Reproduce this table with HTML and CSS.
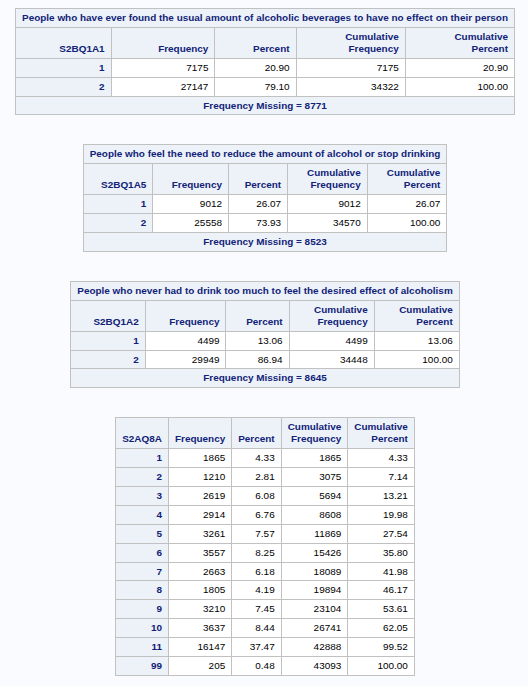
FILE: index.html
```html
<!DOCTYPE html>
<html>
<head>
<meta charset="utf-8">
<link rel="stylesheet" href="styles.css">
</head>
<body>
<div class="page">
<table class="freq">
<thead>
<tr><th class="title" colspan="5">People who have ever found the usual amount of alcoholic beverages to have no effect on their person</th></tr>
<tr><th>S2BQ1A1</th><th>Frequency</th><th>Percent</th><th>Cumulative<br>Frequency</th><th>Cumulative<br>Percent</th></tr>
</thead>
<tbody>
<tr><th>1</th><td>7175</td><td>20.90</td><td>7175</td><td>20.90</td></tr>
<tr><th>2</th><td>27147</td><td>79.10</td><td>34322</td><td>100.00</td></tr>
<tr><th class="foot" colspan="5">Frequency Missing = 8771</th></tr>
</tbody>
</table>

<table class="freq">
<thead>
<tr><th class="title" colspan="5">People who feel the need to reduce the amount of alcohol or stop drinking</th></tr>
<tr><th>S2BQ1A5</th><th>Frequency</th><th>Percent</th><th>Cumulative<br>Frequency</th><th>Cumulative<br>Percent</th></tr>
</thead>
<tbody>
<tr><th>1</th><td>9012</td><td>26.07</td><td>9012</td><td>26.07</td></tr>
<tr><th>2</th><td>25558</td><td>73.93</td><td>34570</td><td>100.00</td></tr>
<tr><th class="foot" colspan="5">Frequency Missing = 8523</th></tr>
</tbody>
</table>

<table class="freq">
<thead>
<tr><th class="title" colspan="5">People who never had to drink too much to feel the desired effect of alcoholism</th></tr>
<tr><th>S2BQ1A2</th><th>Frequency</th><th>Percent</th><th>Cumulative<br>Frequency</th><th>Cumulative<br>Percent</th></tr>
</thead>
<tbody>
<tr><th>1</th><td>4499</td><td>13.06</td><td>4499</td><td>13.06</td></tr>
<tr><th>2</th><td>29949</td><td>86.94</td><td>34448</td><td>100.00</td></tr>
<tr><th class="foot" colspan="5">Frequency Missing = 8645</th></tr>
</tbody>
</table>

<table class="freq">
<thead>
<tr><th>S2AQ8A</th><th>Frequency</th><th>Percent</th><th>Cumulative<br>Frequency</th><th>Cumulative<br>Percent</th></tr>
</thead>
<tbody>
<tr><th>1</th><td>1865</td><td>4.33</td><td>1865</td><td>4.33</td></tr>
<tr><th>2</th><td>1210</td><td>2.81</td><td>3075</td><td>7.14</td></tr>
<tr><th>3</th><td>2619</td><td>6.08</td><td>5694</td><td>13.21</td></tr>
<tr><th>4</th><td>2914</td><td>6.76</td><td>8608</td><td>19.98</td></tr>
<tr><th>5</th><td>3261</td><td>7.57</td><td>11869</td><td>27.54</td></tr>
<tr><th>6</th><td>3557</td><td>8.25</td><td>15426</td><td>35.80</td></tr>
<tr><th>7</th><td>2663</td><td>6.18</td><td>18089</td><td>41.98</td></tr>
<tr><th>8</th><td>1805</td><td>4.19</td><td>19894</td><td>46.17</td></tr>
<tr><th>9</th><td>3210</td><td>7.45</td><td>23104</td><td>53.61</td></tr>
<tr><th>10</th><td>3637</td><td>8.44</td><td>26741</td><td>62.05</td></tr>
<tr><th>11</th><td>16147</td><td>37.47</td><td>42888</td><td>99.52</td></tr>
<tr><th>99</th><td>205</td><td>0.48</td><td>43093</td><td>100.00</td></tr>
</tbody>
</table>
</div>
</body>
</html>
```

FILE: styles.css
```css
html, body {
  margin: 0;
  background: #fafbfe;
}
.page {
  display: flex;
  flex-direction: column;
  align-items: center;
  gap: 29px;
  padding: 8px 0 8px 2px;
  font-family: "Liberation Sans", Arial, sans-serif;
  font-size: 9.95px;
  line-height: 11.9px;
}
.freq {
  border-collapse: collapse;
  border: 1px solid #c1c1c1;
}
.freq th, .freq td {
  border: 1px solid #c1c1c1;
  padding: 3px 6px;
  text-align: right;
  vertical-align: bottom;
  white-space: nowrap;
}
.freq th {
  background: #edf2f9;
  color: #112277;
  font-weight: bold;
}
.freq td {
  background: #ffffff;
  color: #000000;
  font-weight: normal;
}
.freq th.title, .freq th.foot {
  text-align: center;
}
```
